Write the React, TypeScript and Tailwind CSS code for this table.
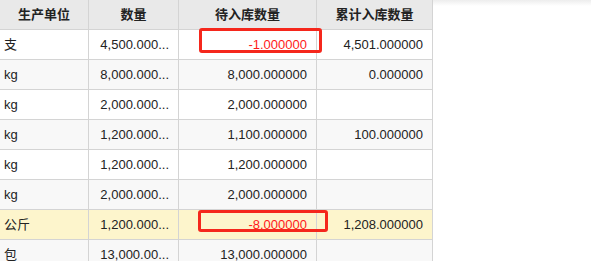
import React from "react";

const rows = [
  { unit: "支", qty: "4,500.000...", pending: "-1.000000", total: "4,501.000000" },
  { unit: "kg", qty: "8,000.000...", pending: "8,000.000000", total: "0.000000" },
  { unit: "kg", qty: "2,000.000...", pending: "2,000.000000", total: "" },
  { unit: "kg", qty: "1,200.000...", pending: "1,100.000000", total: "100.000000" },
  { unit: "kg", qty: "1,200.000...", pending: "1,200.000000", total: "" },
  { unit: "kg", qty: "2,000.000...", pending: "2,000.000000", total: "" },
  { unit: "公斤", qty: "1,200.000...", pending: "-8.000000", total: "1,208.000000" },
  { unit: "包", qty: "13,000.00...", pending: "13,000.000000", total: "" },
];

const cell = "h-[30px] border-r border-b border-[#d4d4d4] flex items-center whitespace-nowrap";

const App = () => {
  return (
    <div
      className="relative w-[591px] h-[261px] overflow-hidden bg-white text-[13px] text-[#222]"
      style={{ fontFamily: '"Liberation Sans", Arial, "Noto Sans CJK SC", sans-serif' }}
    >
      <div className="flex">
        {/* Table */}
        <div className="grid grid-cols-[89px_90px_138px_116px] shrink-0">
          {["生产单位", "数量", "待入库数量", "累计入库数量"].map((h) => (
            <div key={h} className={`${cell} justify-center bg-[#e9e9e9] font-bold`}>
              {h}
            </div>
          ))}
          {rows.map((r, i) => {
            const bg = i === 6 ? "bg-[#fdf5cc]" : i % 2 === 1 ? "bg-[#f8f8f8]" : "bg-white";
            const neg = r.pending.startsWith("-");
            return (
              <React.Fragment key={i}>
                <div className={`${cell} ${bg} pl-1`}>{r.unit}</div>
                <div className={`${cell} ${bg} justify-end pr-[9px]`}>{r.qty}</div>
                <div className={`${cell} ${bg} justify-end pr-[9px] ${neg ? "text-[#ff1a1a]" : ""}`}>
                  {r.pending}
                </div>
                <div className={`${cell} ${bg} justify-end pr-[9px]`}>{r.total}</div>
              </React.Fragment>
            );
          })}
        </div>
        {/* empty area with faint top shadow */}
        <div className="flex-1">
          <div className="h-[6px] bg-gradient-to-b from-[#ededed] to-white" />
        </div>
      </div>

      {/* annotation boxes */}
      <div className="absolute left-[199px] top-[28px] w-[123px] h-[25px] border-[3px] border-[#f5271c] rounded-[3px]" />
      <div className="absolute left-[198px] top-[210px] w-[130px] h-[22px] border-[3px] border-[#f5271c] rounded-[3px]" />
    </div>
  );
};

export default App;
